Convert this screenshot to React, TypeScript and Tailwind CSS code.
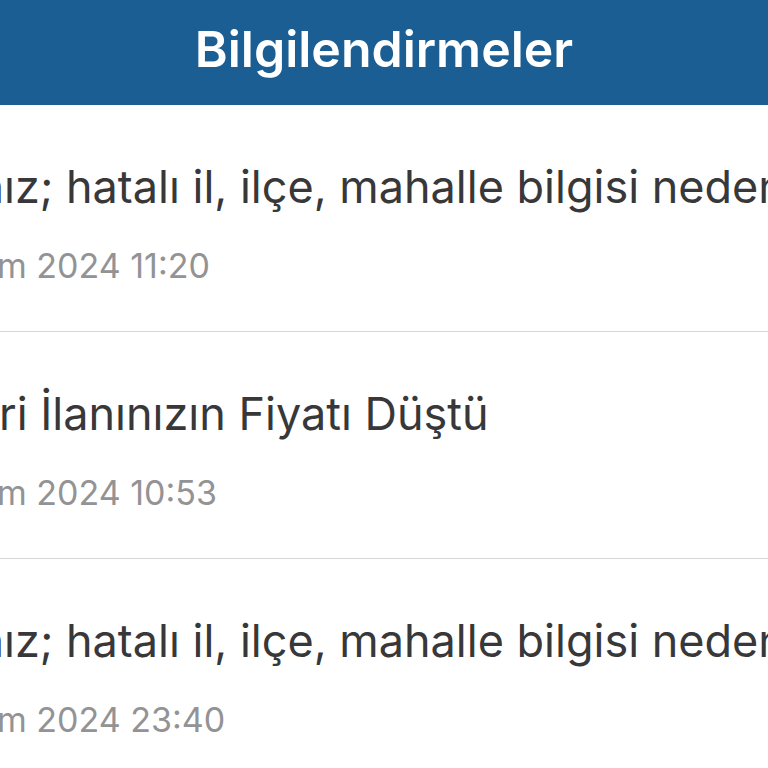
const notifications = [
  {
    hidden: "Yayındaki ilanın",
    title: "ız; hatalı il, ilçe, mahalle bilgisi nedeniyle yayından kaldırılmıştır.",
    hiddenDate: "12 Kası",
    date: "m 2024 11:20",
    shift: "ml-[4px]",
  },
  {
    hidden: "Favo",
    title: "ri İlanınızın Fiyatı Düştü",
    hiddenDate: "12 Kası",
    date: "m 2024 10:53",
    shift: "-ml-[1px]",
  },
  {
    hidden: "Yayındaki ilanın",
    title: "ız; hatalı il, ilçe, mahalle bilgisi nedeniyle yayından kaldırılmıştır.",
    hiddenDate: "11 Kası",
    date: "m 2024 23:40",
    shift: "ml-[4px]",
  },
];

export default function App() {
  return (
    <div className="w-[768px] h-[768px] overflow-hidden bg-white font-['Inter',sans-serif]">
      {/* Header */}
      <header className="h-[105px] bg-[#1b5e93] flex justify-center pt-[12px]">
        <h1 className="text-white text-[50px] leading-normal font-semibold">Bilgilendirmeler</h1>
      </header>

      {/* List */}
      <ul>
        {notifications.map((n, i) => (
          <li key={i} className="h-[227px] border-b-[1.5px] border-[#d6d6d6] pt-[56px]">
            <p className={`relative whitespace-nowrap text-[45px] leading-[52px] text-[#38383a] ${n.shift}`}>
              <span className="absolute right-full">{n.hidden}</span>
              {n.title}
            </p>
            <p className="relative whitespace-nowrap text-[34px] leading-[40px] text-[#939395] mt-[33px] -ml-[3px]">
              <span className="absolute right-full">{n.hiddenDate}</span>
              {n.date}
            </p>
          </li>
        ))}
      </ul>
    </div>
  );
}
